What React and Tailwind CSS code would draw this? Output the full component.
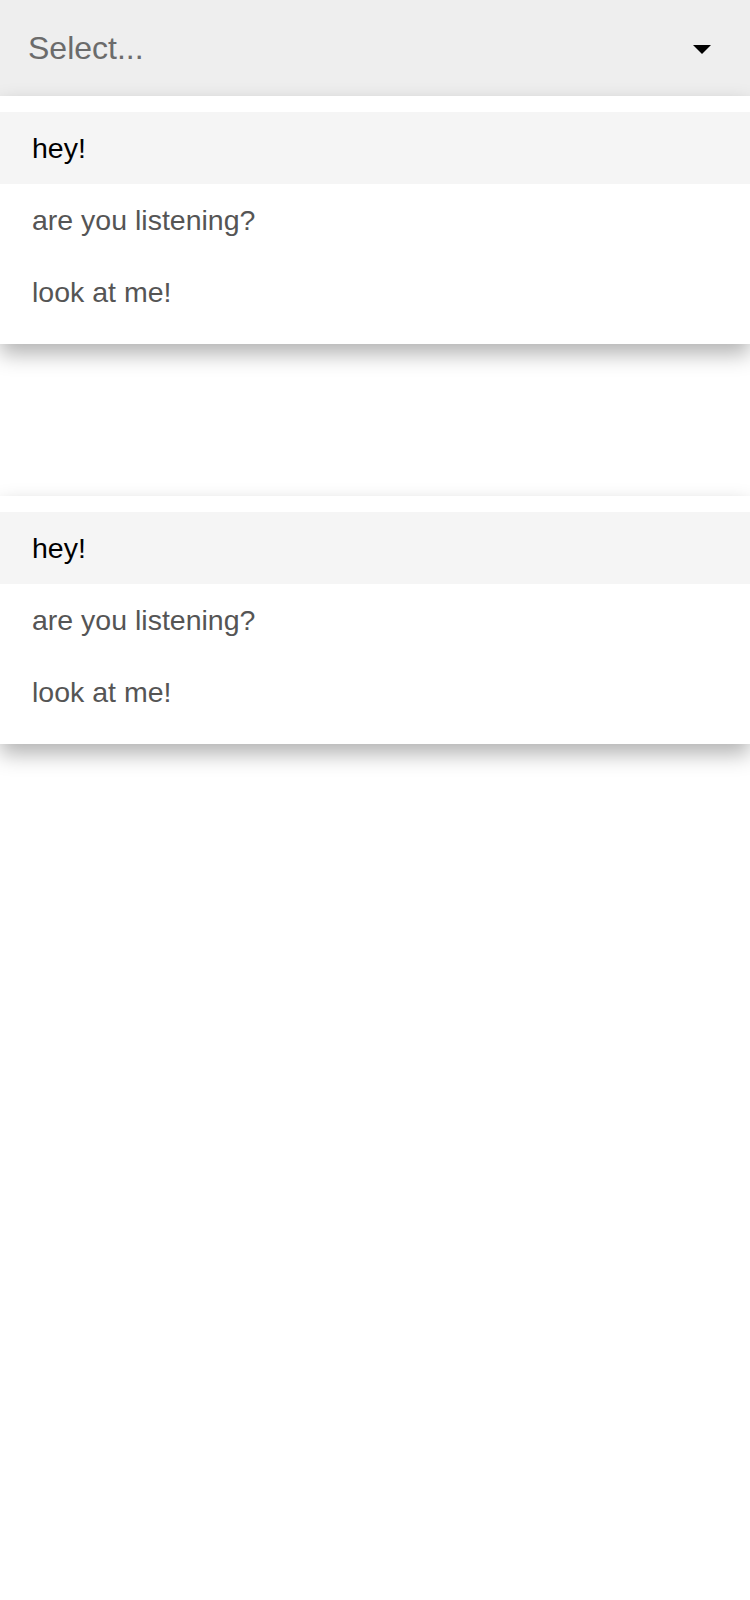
const options = ["hey!", "are you listening?", "look at me!"];

function Menu({ className = "" }) {
  return (
    <ul
      className={
        "relative z-10 bg-white py-4 shadow-[0_10px_20px_rgba(0,0,0,0.3)] " +
        className
      }
    >
      {options.map((opt, i) => (
        <li
          key={opt}
          className={
            "h-[72px] flex items-center px-8 text-[28.5px] " +
            (i === 0 ? "bg-[#f5f5f5] text-black" : "text-[#555555]")
          }
        >
          {opt}
        </li>
      ))}
    </ul>
  );
}

export default function App() {
  return (
    <div
      className="w-[750px] min-h-[1600px] bg-white"
      style={{ fontFamily: '"Liberation Sans", Arial, sans-serif' }}
    >
      {/* Select trigger */}
      <div className="h-24 bg-[#eeeeee] flex items-center justify-between pl-7 pr-[39px]">
        <span className="text-[32px] text-[#6b6b6b]">Select...</span>
        <svg width="18" height="10" viewBox="0 0 18 10" className="mt-1">
          <path d="M0 0 H18 L9 9 Z" fill="#000" />
        </svg>
      </div>

      {/* Open menu */}
      <Menu />

      {/* Second menu */}
      <Menu className="mt-[152px]" />
    </div>
  );
}
